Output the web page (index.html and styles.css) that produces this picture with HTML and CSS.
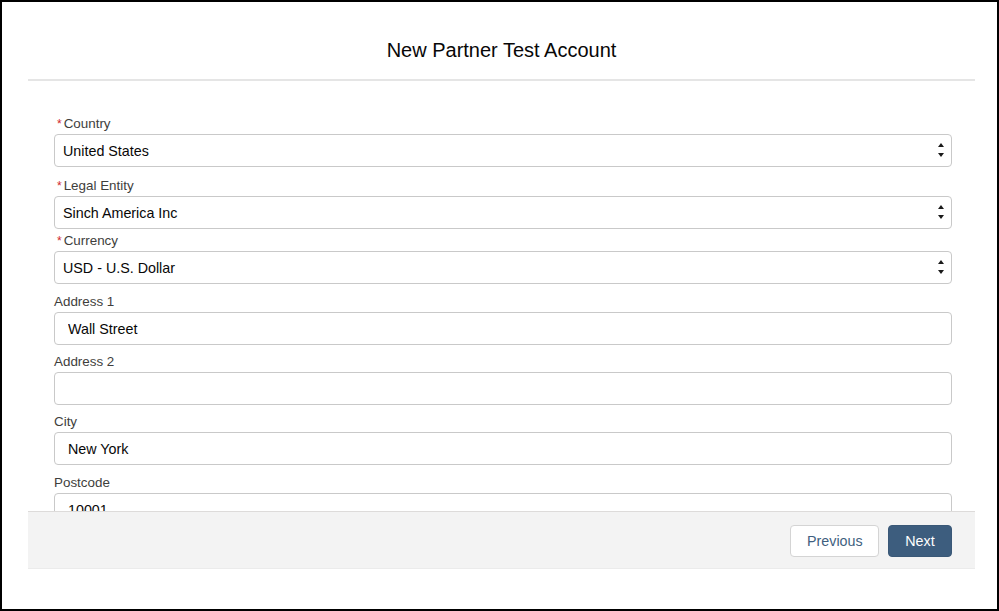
FILE: index.html
```html
<!DOCTYPE html>
<html lang="en">
<head>
  <meta charset="UTF-8" />
  <meta name="viewport" content="width=device-width, initial-scale=1" />
  <title>New Partner Test Account</title>
  <link rel="stylesheet" href="styles.css">
</head>
<body>
  <div class="frame">
    <div class="modal">
      <header class="modal-header">
        <h2>New Partner Test Account</h2>
      </header>

      <div class="modal-body">
        <div class="field field-country">
          <label><abbr>*</abbr>Country</label>
          <div class="select-wrap">
            <select><option>United States</option></select>
            <svg class="arrows" width="6" height="14" viewBox="0 0 6 14"><path d="M3 0L6 4H0Z M0 10H6L3 14Z" fill="#1a1a1a"/></svg>
          </div>
        </div>

        <div class="field field-entity">
          <label><abbr>*</abbr>Legal Entity</label>
          <div class="select-wrap">
            <select><option>Sinch America Inc</option></select>
            <svg class="arrows" width="6" height="14" viewBox="0 0 6 14"><path d="M3 0L6 4H0Z M0 10H6L3 14Z" fill="#1a1a1a"/></svg>
          </div>
        </div>

        <div class="field field-currency">
          <label><abbr>*</abbr>Currency</label>
          <div class="select-wrap">
            <select><option>USD - U.S. Dollar</option></select>
            <svg class="arrows" width="6" height="14" viewBox="0 0 6 14"><path d="M3 0L6 4H0Z M0 10H6L3 14Z" fill="#1a1a1a"/></svg>
          </div>
        </div>

        <div class="field">
          <label>Address 1</label>
          <input type="text" value="Wall Street" />
        </div>

        <div class="field">
          <label>Address 2</label>
          <input type="text" value="" />
        </div>

        <div class="field field-city">
          <label>City</label>
          <input type="text" value="New York" />
        </div>

        <div class="field">
          <label>Postcode</label>
          <input type="text" value="10001" />
        </div>
      </div>

      <footer class="modal-footer">
        <button class="btn btn-neutral">Previous</button>
        <button class="btn btn-brand">Next</button>
      </footer>
    </div>
  </div>
</body>
</html>
```

FILE: styles.css
```css
html, body {
  margin: 0;
  padding: 0;
}

body {
  font-family: 'Liberation Sans', Arial, sans-serif;
  color: #080707;
  background: #fff;
}

.frame {
  width: 999px;
  height: 611px;
  box-sizing: border-box;
  border: 2px solid #000;
  padding: 0 22px 40px 26px;
}

.modal {
  display: flex;
  flex-direction: column;
  height: 100%;
}

.modal-header {
  height: 79px;
  box-sizing: border-box;
  border-bottom: 2px solid #e5e5e5;
  padding-top: 36px;
  text-align: center;
}

.modal-header h2 {
  margin: 0;
  font-size: 20px;
  font-weight: normal;
  line-height: 25px;
  color: #080707;
}

.modal-body {
  flex: 1;
  overflow: hidden;
  padding: 34px 23px 0 26px;
}

.field {
  display: flex;
  flex-direction: column;
  gap: 1px;
  margin-bottom: 8px;
}

.field-country { margin-bottom: 10px; }
.field-entity { margin-bottom: 3px; }
.field-currency { margin-bottom: 9px; }
.field-city { margin-bottom: 9px; }

label {
  font-size: 13.4px;
  line-height: 18px;
  color: #3e3e3c;
}

label abbr {
  color: #d0272a;
  text-decoration: none;
  font-size: 12px;
  margin: 0 2px 0 3px;
}

input, select {
  font-family: inherit;
  font-size: 14.3px;
  color: #080707;
  height: 33px;
  width: 100%;
  box-sizing: border-box;
  border: 1px solid #c9c9c9;
  border-radius: 4px;
  background: #fff;
  outline: none;
}

input {
  padding: 0 13px;
}

.select-wrap {
  position: relative;
}

select {
  appearance: none;
  -webkit-appearance: none;
  padding: 0 24px 0 8px;
}

.arrows {
  position: absolute;
  right: 8px;
  top: 9px;
}

.modal-footer {
  height: 58px;
  box-sizing: border-box;
  background: #f3f3f3;
  border-top: 1px solid #dddbda;
  border-bottom: 1px solid #ebebeb;
  display: flex;
  justify-content: flex-end;
  align-items: center;
  gap: 9px;
  padding: 1px 23px 0 0;
}

.btn {
  font-family: inherit;
  font-size: 14.3px;
  height: 32px;
  border-radius: 4px;
  cursor: pointer;
  padding: 0 16px;
}

.btn-neutral {
  width: 89px;
  background: #fff;
  color: #3f5f80;
  border: 1px solid #d4d4d4;
}

.btn-brand {
  width: 64px;
  background: #3d5d7e;
  color: #fff;
  border: 1px solid #3a5877;
}
```
